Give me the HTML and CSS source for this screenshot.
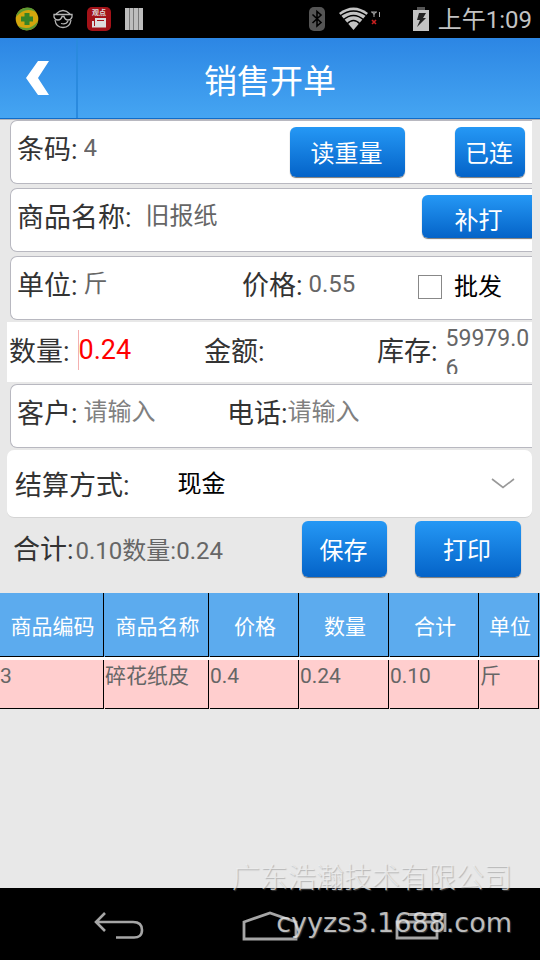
FILE: index.html
```
<!DOCTYPE html>
<html lang="zh-CN">
<head>
<meta charset="utf-8">
<meta name="viewport" content="width=device-width">
<title>销售开单</title>
<link rel="stylesheet" href="styles.css">
</head>
<body>
<div class="status">
  <svg width="24" height="24" viewBox="0 0 24 24" aria-hidden="true">
    <circle cx="12" cy="12" r="11.3" fill="#d3a60c"/>
    <path d="M1 10A11.3 11.3 0 0 1 21 5Q10-1 1 10ZM23 14A11.3 11.3 0 0 1 3 19Q15 25 23 14Z" fill="#5c9a34"/>
    <path d="M9.500 6h5v3.500H18v5h-3.500V18h-5v-3.500H6v-5h3.500Z" fill="#378326"/>
  </svg>
  <svg class="face" width="20" height="20" viewBox="0 0 20 20" fill="none" stroke="#b5b5b5" stroke-width="1.300" aria-hidden="true">
    <path d="M3 5Q10-2 17 5M2 11Q3 18.500 10 18.500T18 11M8 14.500Q13 16 15 12"/>
    <path d="M1 5.500H19V8Q18 11 15 11T11 7.500H9Q8 11 5 11T1 8Z"/>
  </svg>
  <span class="news"><b>观点</b>
    <svg width="16" height="10" viewBox="0 0 16 10" aria-hidden="true"><path d="M1 3H4V0H15V9.500H1Z" fill="#ddd"/><path d="M6 2.500H13M3.500 3V8" stroke="#a31218"/></svg>
  </span>
  <svg class="bars" width="18" height="22" viewBox="0 0 18 22" aria-hidden="true"><path fill="#777" d="M0 0H18V22H0Z"/><path fill="#bdbdbd" d="M0 0H4V22H0ZM5 0H8V22H5ZM9 0H13V22H9ZM14 0H18V22H14Z"/></svg>
  <span class="spacer"></span>
  <svg width="16" height="24" viewBox="0 0 16 24" aria-hidden="true"><rect width="16" height="24" rx="5" fill="#555"/><path d="M3.500 7.500L12 15.500L8 19V4.500L12 8L3.500 16" fill="none" stroke="#000" stroke-width="1.600"/></svg>
  <svg class="wifi" width="42" height="24" viewBox="0 0 42 24" aria-hidden="true">
    <path fill="#c3c3c3" d="M0 6Q14.500-5 29 6L14.500 23Z"/>
    <path fill="none" stroke="#000" stroke-width="1.400" d="M1 9Q14.500-1 28 9M4 13Q14.500 4 25 13M8 17Q14.500 10 21 17"/>
    <path d="M32 5H38M33 5L35 7.500L37 5M35 5V10M40.500 5V10" stroke="#aaa" fill="none"/>
    <path d="M33 13L37 17M37 13L33 17" stroke="#c92020" stroke-width="1.600"/>
  </svg>
  <svg class="battery" width="16" height="24" viewBox="0 0 16 24" aria-hidden="true"><path fill="#555" d="M4 0H12V4H4Z"/><path fill="#c3c3c3" d="M0 3H16V24H0Z"/><path fill="#222" d="M6 6H13L10 11H13L4 20L7 13H4Z"/></svg>
  <time>上午1:09</time>
</div>

<header class="bar">
  <button class="back" type="button" aria-label="返回">
    <svg width="24" height="34" viewBox="0 0 24 34" aria-hidden="true"><path d="M12 0H23L12 17L23 34H12L0 17Z" fill="#fff"/></svg>
  </button>
  <h1>销售开单</h1>
</header>

<main>
  <form class="form">
    <div class="row card">
      <div class="field grow"><label for="code">条码:</label><input id="code" value="4"></div>
      <button class="btn wide" type="button">读重量</button>
      <button class="btn linked" type="button">已连</button>
    </div>
    <div class="row card">
      <div class="field name grow"><label for="name">商品名称:</label><input id="name" value="旧报纸"></div>
      <button class="btn wide reprint" type="button">补打</button>
    </div>
    <div class="row card unit-row">
      <div class="field"><label for="unit">单位:</label><input id="unit" value="斤"></div>
      <div class="field"><label for="price">价格:</label><input id="price" value="0.55"></div>
      <label class="check"><input type="checkbox">批发</label>
    </div>
    <div class="row plain">
      <div class="field"><label for="qty">数量:</label><input id="qty" class="qty" value="0.24"></div>
      <div class="field"><label for="amount">金额:</label><output id="amount"></output></div>
      <div class="field"><label for="stock">库存:</label><output id="stock" class="stock">59979.06</output></div>
    </div>
    <div class="row card client-row">
      <div class="field"><label for="client">客户:</label><input id="client" placeholder="请输入"></div>
      <div class="field tight"><label for="phone">电话:</label><input id="phone" placeholder="请输入"></div>
    </div>
    <div class="row pay">
      <label for="pay">结算方式:</label>
      <select id="pay"><option>现金</option></select>
      <svg width="24" height="12" viewBox="0 0 24 12" aria-hidden="true"><path d="M1 1L12 9.500L23 1" fill="none" stroke="#999" stroke-width="1.600"/></svg>
    </div>
    <div class="total">
      <p>合计:<span>0.10数量:0.24</span></p>
      <button class="btn save" type="button">保存</button>
      <button class="btn print" type="button">打印</button>
    </div>
  </form>
  <table>
    <colgroup><col class="c-text"><col class="c-text"><col class="c-num"><col class="c-num"><col class="c-num"><col class="c-unit"></colgroup>
    <thead><tr><th>商品编码</th><th>商品名称</th><th>价格</th><th>数量</th><th>合计</th><th>单位</th></tr></thead>
    <tbody><tr><td>3</td><td>碎花纸皮</td><td>0.4</td><td>0.24</td><td>0.10</td><td>斤</td></tr></tbody>
  </table>
</main>

<nav class="nav">
  <button type="button" aria-label="返回"><svg width="52" height="28" viewBox="0 0 52 28" aria-hidden="true"><path d="M12 1L3 10L12 19M3 10H40Q49 10 49 18T40 25.500H23" fill="none" stroke="#a6a6a6" stroke-width="2.600"/></svg></button>
  <button type="button" aria-label="主页"><svg width="56" height="30" viewBox="0 0 56 30" aria-hidden="true"><path d="M2 11L28 2L54 11V28H2Z" fill="none" stroke="#a6a6a6" stroke-width="2.800"/></svg></button>
  <button type="button" aria-label="最近"><svg width="52" height="28" viewBox="0 0 52 28" aria-hidden="true"><path d="M2 10H42V26H2ZM13 2.500H50V20" fill="none" stroke="#a6a6a6" stroke-width="2.800"/></svg></button>
  <p class="mark"><span>广东浩瀚技术有限公司</span><span class="site">cyyzs3.1688.com</span></p>
</nav>
</body>
</html>
```

FILE: styles.css
```
* {
  box-sizing: border-box;
}

body {
  margin: 0;
  min-height: 100vh;
  display: flex;
  flex-direction: column;
  background: #e8e8e8;
  color: #333;
  font-family: Roboto, "Noto Sans CJK SC", sans-serif;
  font-size: 27px;
}

h1,
p {
  margin: 0;
  font-weight: 400;
}

button,
input,
select {
  margin: 0;
  padding: 0;
  border: 0;
  background: none;
  border-radius: 0;
  font: inherit;
  color: inherit;
  outline: 0;
}

svg {
  display: block;
  flex: none;
}

/* system status bar */
.status {
  height: 38px;
  padding: 0 8px 0 15px;
  display: flex;
  align-items: center;
  background: #000;
  color: #c3c3c3;
  font-size: 24px;
}

.status time {
  padding-bottom: 4px;
}

.face {
  margin-left: 14px;
}

.news {
  width: 24px;
  height: 24px;
  margin: 0 14px;
  padding-top: 2px;
  border-radius: 5px;
  background: #a31218;
  color: #ddd;
  display: flex;
  flex-direction: column;
  align-items: center;
  gap: 1px;
}

.news b {
  font-size: 7px;
  line-height: 8px;
}

.spacer {
  flex: 1;
}

.wifi {
  margin-left: 14px;
}

.battery {
  margin: 0 9px 0 32px;
}

/* title bar */
.bar {
  height: 81px;
  display: flex;
  align-items: center;
  background: linear-gradient(#2c86e4, #45a5f2);
  border-bottom: 1px solid #0f6cc9;
}

.back {
  width: 78px;
  height: 100%;
  padding-left: 26px;
  border-right: 2px solid #2a8ade;
}

.bar h1 {
  flex: 1;
  padding: 8px 78px 0 0;
  text-align: center;
  color: #fff;
  font-size: 33px;
  line-height: 40px;
}

main {
  flex: 1;
  border-top: 1px solid #b4b4b8;
}

/* order form */
.form {
  padding: 0 8px 0 7px;
}

.row {
  display: grid;
  background: #fff;
}

.card {
  height: 64px;
  margin: 0 0 4px 3px;
  padding-left: 6px;
  align-items: start;
  border: 1px solid #b8b8c0;
  border-right: 0;
  border-radius: 7px 0 0 7px;
  overflow: hidden;
}

.card:has(.grow) {
  display: flex;
}

.grow {
  flex: 1;
}

.field {
  min-width: 0;
  display: flex;
  align-items: center;
  gap: 6px;
  line-height: 58px;
}

.field label {
  flex: none;
}

.field input {
  flex: 1;
  width: 100%;
  min-width: 0;
  height: 40px;
  margin-bottom: 4px;
  color: #666;
  font-size: 24px;
}

.field input::placeholder {
  color: #808080;
  opacity: 1;
}

.name {
  gap: 14px;
}

.tight {
  gap: 0;
}

.unit-row {
  grid-template-columns: 225fr 176fr 114fr;
  margin-bottom: 2px;
}

.client-row {
  grid-template-columns: 210fr 305fr;
  margin-bottom: 2px;
}

.check {
  display: flex;
  align-items: center;
  gap: 12px;
  color: #000;
  font-size: 24px;
  line-height: 60px;
}

.check input {
  appearance: none;
  width: 24px;
  height: 24px;
  border: 1px solid #888;
}

.plain {
  height: 60px;
  margin-bottom: 2px;
  padding-left: 2px;
  grid-template-columns: 195fr 173fr 155fr;
  align-items: center;
}

.plain .field {
  gap: 8px;
}

.plain .qty {
  border-left: 1px solid #f4b0b0;
  color: #f00;
  font-size: 27px;
}

.stock {
  height: 50px;
  margin-bottom: 6px;
  flex: 1;
  color: #666;
  font-size: 23px;
  line-height: 30px;
  overflow: hidden;
  overflow-wrap: anywhere;
}

.pay {
  height: 68px;
  padding: 0 17px 0 8px;
  display: flex;
  align-items: center;
  border-bottom: 1px solid #d4d4d4;
  border-radius: 7px;
}

.pay select {
  appearance: none;
  flex: 1;
  margin-left: 48px;
  color: #000;
  font-size: 24px;
}

/* raised blue buttons */
.btn {
  height: 50px;
  flex: none;
  margin-top: 6px;
  padding: 0 2px 2px 0;
  border-radius: 6px;
  background: linear-gradient(#2598f5, #0463c8);
  box-shadow: 0 1px 1px #777;
  color: #fff;
  font-size: 24px;
}

.wide {
  width: 115px;
}

.linked {
  width: 70px;
  margin: 6px 7px 0 50px;
}

.reprint {
  height: 43px;
  margin-right: -5px;
  padding-top: 5px;
}

.total {
  display: flex;
  align-items: center;
  padding: 3px 11px 16px 6px;
}

.total p {
  flex: 1;
  padding-bottom: 4px;
}

.total span {
  margin-left: 2px;
  color: #666;
  font-size: 24px;
}

.total .btn {
  height: 56px;
  margin-top: 0;
}

.total .save {
  width: 85px;
  margin-right: 28px;
}

.total .print {
  width: 106px;
}

/* order lines */
table {
  width: 100%;
  table-layout: fixed;
  border-spacing: 0;
  font-size: 21px;
}

.c-text {
  width: 19.444%;
}

.c-num {
  width: 16.667%;
}

th,
td {
  padding: 0;
  background:
    linear-gradient(#000, #000) right 1px top 0 / 1px 100% no-repeat,
    linear-gradient(#000, #000) left 0 bottom 0 / calc(100% - 1px) 1px no-repeat;
}

th {
  height: 67px;
  border-bottom: 3px solid #fff;
  background-color: #5cabee;
  background-clip: padding-box;
  background-origin: padding-box;
  color: #fff;
  font-weight: 400;
}

td {
  height: 49px;
  background-color: #ffcece;
  color: #666;
  line-height: 32px;
  vertical-align: top;
}

/* system navigation */
.nav {
  position: relative;
  height: 72px;
  padding: 4px 93px 0;
  display: flex;
  align-items: center;
  justify-content: space-between;
  background: #000;
}

.mark {
  position: absolute;
  right: 28px;
  bottom: 19px;
  display: flex;
  flex-direction: column;
  align-items: flex-end;
  gap: 8px;
  color: rgb(240 240 240 / 75%);
  font-size: 28px;
  font-weight: 300;
  line-height: 36px;
  text-shadow: 1px 1px 1px rgb(120 120 120 / 45%);
  white-space: nowrap;
}

.site {
  font-family: "DejaVu Sans", sans-serif;
  font-size: 27px;
  font-weight: 400;
}
```
